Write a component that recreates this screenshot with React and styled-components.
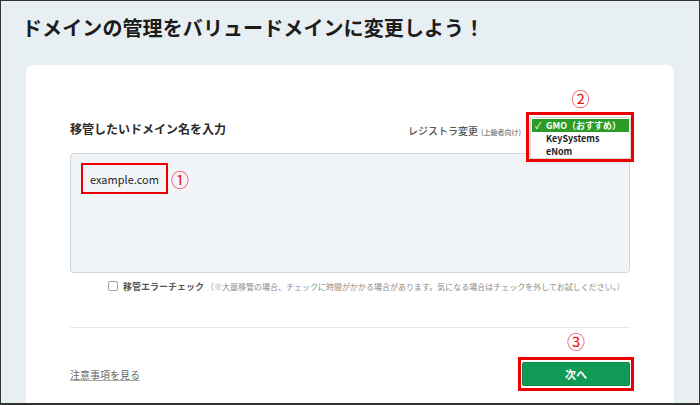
import React from 'react'
import styled, { createGlobalStyle } from 'styled-components'

const GlobalStyle = createGlobalStyle`
  html, body {
    margin: 0;
    padding: 0;
    background: #ffffff;
  }
  body {
    font-family: "Noto Sans CJK JP", "Noto Sans", sans-serif;
  }
`

const App = () => {
  return (
    <>
      <GlobalStyle />
      <Page>
        <Title>ドメインの管理をバリュードメインに変更しよう！</Title>
        <Card>
          <HeaderRow>
            <Heading>移管したいドメイン名を入力</Heading>
            <RegistrarGroup>
              <RegistrarLabel>
                レジストラ変更<Small>(上級者向け)</Small>
              </RegistrarLabel>
              <SelectSlot>
                <Menu>
                  <Option $selected>
                    <Check>✓</Check>GMO（おすすめ）
                  </Option>
                  <Option>
                    <Check />KeySystems
                  </Option>
                  <Option>
                    <Check />eNom
                  </Option>
                </Menu>
                <Highlight $top={-5} $left={-4} $right={-3} $bottom={-21} />
                <Marker $top={-28}>②</Marker>
              </SelectSlot>
            </RegistrarGroup>
          </HeaderRow>

          <DomainInput>
            <InputLine>
              <BoxedValue>example.com</BoxedValue>
              <InlineMarker>①</InlineMarker>
            </InputLine>
          </DomainInput>

          <CheckRow>
            <CheckBox />
            <CheckLabel>移管エラーチェック</CheckLabel>
            <CheckNote>（※大量移管の場合、チェックに時間がかかる場合があります。気になる場合はチェックを外してお試しください。）</CheckNote>
          </CheckRow>

          <Divider />

          <Footer>
            <NoteLink>注意事項を見る</NoteLink>
            <ButtonSlot>
              <NextButton>次へ</NextButton>
              <Highlight $top={-5} $left={-4} $right={-4} $bottom={-5} />
              <Marker $top={-30}>③</Marker>
            </ButtonSlot>
          </Footer>
        </Card>
      </Page>
    </>
  )
}

const Page = styled.div`
  width: 700px;
  height: 405px;
  box-sizing: border-box;
  border: 1px solid #333333;
  border-bottom-width: 2px;
  background: #e8eff2;
  overflow: hidden;
  display: flex;
  flex-direction: column;
`

const Title = styled.h1`
  margin: 0;
  padding: 15px 0 0 21px;
  font-size: 20px;
  line-height: 24px;
  font-weight: 700;
  color: #1c1c1c;
  letter-spacing: 0.1px;
`

const Card = styled.div`
  margin: 25px 25px 0;
  flex: 1;
  background: #ffffff;
  border-radius: 7px 7px 0 0;
  padding: 52px 44px 0;
  display: flex;
  flex-direction: column;
`

const HeaderRow = styled.div`
  display: flex;
  justify-content: space-between;
  align-items: center;
  height: 24px;
`

const Heading = styled.h2`
  margin: 0;
  font-size: 12px;
  line-height: 16px;
  font-weight: 700;
  color: #2a2a2a;
`

const RegistrarGroup = styled.div`
  display: flex;
  align-items: flex-start;
  gap: 9px;
  margin-right: -1px;
`

const RegistrarLabel = styled.span`
  font-size: 10px;
  line-height: 14px;
  margin-top: 7px;
  color: #555555;
  font-weight: 500;
`

const Small = styled.span`
  font-size: 7px;
  color: #777777;
  margin-left: 3px;
`

const SelectSlot = styled.div`
  position: relative;
  width: 101px;
  height: 24px;
`

const Menu = styled.div`
  position: absolute;
  top: 0;
  left: 0;
  width: 101px;
  box-sizing: border-box;
  padding: 1px 1px 0;
  background: #ffffff;
  border: 1px solid #d6d6d6;
  border-radius: 3px;
  box-shadow: 0 2px 4px rgba(0, 0, 0, 0.22);
  z-index: 2;
`

const Option = styled.div`
  display: grid;
  grid-template-columns: 11px 1fr;
  align-items: center;
  height: 13px;
  padding-left: 3px;
  font-size: 9px;
  font-weight: 700;
  color: ${p => (p.$selected ? '#ffffff' : '#1e1e1e')};
  background: ${p => (p.$selected ? '#2d9c26' : 'transparent')};
  white-space: nowrap;
`

const Check = styled.span`
  font-size: 9px;
  font-weight: 400;
`

const Highlight = styled.div`
  position: absolute;
  top: ${p => p.$top}px;
  left: ${p => p.$left}px;
  right: ${p => p.$right}px;
  bottom: ${p => p.$bottom}px;
  border: 3px solid #ee0000;
  pointer-events: none;
  z-index: 3;
`

const Marker = styled.span`
  position: absolute;
  top: ${p => p.$top}px;
  left: 50%;
  transform: translateX(-50%);
  font-size: 18px;
  line-height: 18px;
  color: #ee1111;
`

const DomainInput = styled.div`
  margin-top: 12px;
  height: 120px;
  box-sizing: border-box;
  background: #f2f5f7;
  border: 1px solid #cfd5d9;
  border-radius: 4px;
  padding: 9px 10px;
`

const InputLine = styled.div`
  display: flex;
  align-items: center;
  gap: 3px;
`

const BoxedValue = styled.span`
  display: inline-flex;
  align-items: center;
  height: 31px;
  box-sizing: border-box;
  padding: 0 7px;
  border: 2px solid #ee0000;
  font-size: 11px;
  color: #1e1e1e;
`

const InlineMarker = styled.span`
  font-size: 18px;
  color: #ee1111;
`

const CheckRow = styled.div`
  display: flex;
  align-items: center;
  margin-top: 7px;
  padding-left: 38px;
  height: 12px;
  white-space: nowrap;
`

const CheckBox = styled.span`
  width: 8px;
  height: 8px;
  border: 1px solid #a0a0a0;
  border-radius: 2px;
  background: #ffffff;
  margin-right: 5px;
`

const CheckLabel = styled.span`
  font-size: 9px;
  font-weight: 700;
  color: #555555;
`

const CheckNote = styled.span`
  font-size: 8px;
  color: #8a8a8a;
  margin-left: 2px;
`

const Divider = styled.div`
  margin-top: 35px;
  height: 1px;
  background: #e4e7e9;
`

const Footer = styled.div`
  display: flex;
  justify-content: space-between;
  align-items: center;
  margin-top: 34px;
`

const NoteLink = styled.a`
  font-size: 10px;
  color: #666666;
  text-decoration: underline;
  text-decoration-color: #aaaaaa;
  cursor: pointer;
`

const ButtonSlot = styled.div`
  position: relative;
`

const NextButton = styled.button`
  display: block;
  width: 108px;
  height: 24px;
  background: #119a55;
  border: 1px solid #0d8a4a;
  border-radius: 2px;
  color: #ffffff;
  font-family: "Noto Sans CJK JP", "Noto Sans", sans-serif;
  font-size: 11px;
  font-weight: 700;
  padding: 0;
`

export default App
